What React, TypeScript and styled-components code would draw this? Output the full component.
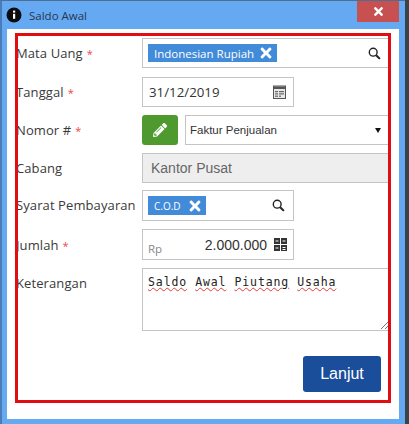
import React from "react";
import styled, { createGlobalStyle } from "styled-components";
import { FaPencilAlt, FaTimes } from "react-icons/fa";

const Global = createGlobalStyle`
  html, body { margin: 0; padding: 0; background: #3d4248; }
  body { width: 409px; height: 424px; overflow: hidden; font-family: "Open Sans", sans-serif; }
`;

const Desktop = styled.div`
  width: 409px;
  height: 424px;
  display: flex;
  align-items: flex-start;
`;

const Win = styled.div`
  position: relative;
  width: 405px;
  height: 424px;
  box-sizing: border-box;
  background: #66a9f3;
  border-left: 2px solid #4a7db5;
  border-top: 1px solid #4f6f92;
  display: flex;
  flex-direction: column;
`;

const TitleBar = styled.div`
  height: 28px;
  flex: none;
  display: flex;
  align-items: center;
  padding-left: 4px;
  gap: 7px;
  font-size: 11.5px;
  color: #26384e;
`;

const CloseBtn = styled.div`
  position: absolute;
  top: 0;
  right: 6px;
  width: 42px;
  height: 21px;
  background: #c75050;
  color: #fff;
  display: flex;
  align-items: center;
  justify-content: center;
  font-size: 13px;
`;

const Body = styled.div`
  margin: 0 6px 0 5px;
  height: 390px;
  background: #fff;
  box-sizing: border-box;
  padding: 9px 0 0 9px;
  display: flex;
  flex-direction: column;
`;

const Row = styled.div<{ $h: number; $gap: number }>`
  display: flex;
  height: ${(p) => p.$h}px;
  margin-bottom: ${(p) => p.$gap}px;
  align-items: center;
`;

const TopRow = styled(Row)`
  align-items: flex-start;
`;

const Label = styled.div`
  width: 126px;
  flex: none;
  font-size: 13px;
  letter-spacing: 0.1px;
  color: #3a3a3a;
  white-space: nowrap;
`;

const TopLabel = styled(Label)`
  padding-top: 6px;
`;

const RaisedLabel = styled(Label)`
  margin-top: -2px;
`;

const Req = styled.span`
  color: #ea4a4a;
  margin-left: 4px;
  font-size: 11px;
`;

const Field = styled.div<{ $w: number; $disabled?: boolean; $pr?: number }>`
  width: ${(p) => p.$w}px;
  height: 100%;
  box-sizing: border-box;
  border: 1px solid #c4c4c4;
  background: ${(p) => (p.$disabled ? "#eeeeee" : "#fff")};
  display: flex;
  align-items: center;
  padding: 0 ${(p) => p.$pr ?? 8}px 0 5px;
`;

const Tag = styled.span`
  display: inline-flex;
  align-items: center;
  height: 18px;
  padding: 0 3px 0 6px;
  gap: 4px;
  background: #428bd9;
  color: #fff;
  font-size: 11.5px;
  white-space: nowrap;
`;

const SmallTag = styled(Tag)`
  font-size: 10px;
  height: 19px;
  gap: 6px;
`;

const Spacer = styled.div`
  flex: 1;
`;

const DateText = styled.span`
  font-size: 13.3px;
  color: #333;
  padding-left: 1px;
`;

const GreenBtn = styled.div`
  width: 36px;
  height: 100%;
  flex: none;
  background: #4f9a2f;
  border-radius: 3px;
  color: #fff;
  display: flex;
  align-items: center;
  justify-content: center;
  font-size: 14px;
  margin-right: 7px;
`;

const SelectBox = styled.div`
  flex: none;
  width: 206px;
  height: 100%;
  box-sizing: border-box;
  border: 1px solid #c4c4c4;
  display: flex;
  align-items: center;
  justify-content: space-between;
  padding: 0 9px 0 4px;
  font-family: "Liberation Sans", sans-serif;
  font-size: 11.5px;
  color: #333;
`;

const Arrow = styled.span`
  width: 0;
  height: 0;
  border-left: 3px solid transparent;
  border-right: 3px solid transparent;
  border-top: 5px solid #111;
`;

const Disabled = styled.span`
  font-family: "Liberation Sans", sans-serif;
  font-size: 14px;
  color: #666;
  padding-left: 3px;
`;

const Rp = styled.span`
  font-size: 11.5px;
  color: #888;
  margin-top: 7px;
`;

const Amount = styled.span`
  font-family: "Liberation Sans", sans-serif;
  font-size: 14px;
  color: #333;
  margin-left: auto;
  margin-right: 7px;
`;

const TextArea = styled.div`
  position: relative;
  width: 249px;
  height: 100%;
  box-sizing: border-box;
  border: 1px solid #c4c4c4;
  padding: 6px 5px;
  font-family: "DejaVu Sans Mono", monospace;
  font-size: 11.5px;
  color: #222;
  display: flex;
  gap: 8px;
  letter-spacing: 0.9px;
`;

const Wavy = styled.span`
  text-decoration: underline wavy #e03c3c 1px;
  text-underline-offset: 1px;
`;

const Grip = styled.svg`
  position: absolute;
  right: 0;
  bottom: 0;
`;

const Footer = styled.div`
  display: flex;
  justify-content: flex-end;
  padding-right: 18px;
`;

const Lanjut = styled.div`
  width: 78px;
  height: 36px;
  background: #1a4e9b;
  border-radius: 3px;
  color: #fff;
  font-family: "Liberation Sans", sans-serif;
  font-size: 16px;
  display: flex;
  align-items: center;
  justify-content: center;
`;

const Annotation = styled.div`
  position: absolute;
  left: 13px;
  top: 32px;
  width: 376px;
  height: 370px;
  box-sizing: border-box;
  border: 3px solid #e20d13;
  pointer-events: none;
`;

const InfoIcon = () => (
  <svg width="16" height="16" viewBox="0 0 16 16">
    <circle cx="8" cy="8" r="7.5" fill="#0c0c0c" />
    <rect x="7" y="6.8" width="2.2" height="5" fill="#fff" />
    <rect x="7" y="3.6" width="2.2" height="2" fill="#fff" />
  </svg>
);

const SearchIcon = () => (
  <svg width="13" height="13" viewBox="0 0 14 14" fill="none" stroke="#222">
    <circle cx="5.6" cy="5.6" r="4.2" strokeWidth="1.5" />
    <path d="M8.8 8.8 L12.8 12.8" strokeWidth="2.2" />
  </svg>
);

const CalendarIcon = () => (
  <svg width="13" height="14" viewBox="0 0 13 14">
    <rect x="0.5" y="1" width="12" height="12.5" fill="#e8e8e8" stroke="#555" />
    <rect x="1" y="1.5" width="11" height="2.5" fill="#555" />
    <rect x="2" y="6" width="3" height="1.2" fill="#666" />
    <rect x="6" y="6" width="5" height="1.2" fill="#666" />
    <rect x="2" y="8.3" width="3" height="1.2" fill="#666" />
    <rect x="6" y="8.3" width="5" height="1.2" fill="#666" />
    <rect x="2" y="10.6" width="3" height="1.2" fill="#666" />
    <rect x="6" y="10.6" width="2" height="1.2" fill="#666" />
  </svg>
);

const CalcIcon = () => (
  <svg width="13" height="13" viewBox="0 0 13 13">
    <rect x="0" y="0" width="6" height="6" fill="#333" />
    <rect x="7" y="0" width="6" height="6" fill="#333" />
    <rect x="0" y="7" width="6" height="6" fill="#333" />
    <rect x="7" y="7" width="6" height="6" fill="#333" />
    <rect x="1.5" y="2.5" width="3" height="1" fill="#fff" />
    <rect x="8.5" y="2.5" width="3" height="1" fill="#fff" />
    <rect x="1.5" y="9.5" width="3" height="1" fill="#fff" />
    <rect x="8.5" y="9" width="3" height="1" fill="#fff" />
    <rect x="8.5" y="11" width="3" height="1" fill="#fff" />
  </svg>
);

export default function App() {
  return (
    <Desktop>
      <Global />
      <Win>
        <TitleBar>
          <InfoIcon />
          <span>Saldo Awal</span>
        </TitleBar>
        <CloseBtn>
          <FaTimes />
        </CloseBtn>
        <Body>
          <Row $h={30} $gap={9}>
            <Label>
              Mata Uang<Req>*</Req>
            </Label>
            <Field $w={249} $pr={9}>
              <Tag>
                Indonesian Rupiah
                <FaTimes size={16} />
              </Tag>
              <Spacer />
              <SearchIcon />
            </Field>
          </Row>
          <Row $h={30} $gap={8}>
            <Label>
              Tanggal<Req>*</Req>
            </Label>
            <Field $w={152} $pr={7}>
              <DateText>31/12/2019</DateText>
              <Spacer />
              <CalendarIcon />
            </Field>
          </Row>
          <Row $h={30} $gap={8}>
            <Label>
              Nomor #<Req>*</Req>
            </Label>
            <GreenBtn>
              <FaPencilAlt />
            </GreenBtn>
            <SelectBox>
              Faktur Penjualan
              <Arrow />
            </SelectBox>
          </Row>
          <Row $h={30} $gap={7}>
            <Label>Cabang</Label>
            <Field $w={249} $disabled>
              <Disabled>Kantor Pusat</Disabled>
            </Field>
          </Row>
          <Row $h={31} $gap={8}>
            <RaisedLabel>Syarat Pembayaran</RaisedLabel>
            <Field $w={152}>
              <SmallTag>
                C.O.D
                <FaTimes size={16} />
              </SmallTag>
              <Spacer />
              <SearchIcon />
            </Field>
          </Row>
          <Row $h={31} $gap={8}>
            <Label>
              Jumlah<Req>*</Req>
            </Label>
            <Field $w={152} $pr={6}>
              <Rp>Rp</Rp>
              <Amount>2.000.000</Amount>
              <CalcIcon />
            </Field>
          </Row>
          <TopRow $h={63} $gap={25}>
            <TopLabel>Keterangan</TopLabel>
            <TextArea>
              <Wavy>Saldo</Wavy>
              <Wavy>Awal</Wavy>
              <Wavy>Piutang</Wavy>
              <Wavy>Usaha</Wavy>
              <Grip width="10" height="10" viewBox="0 0 10 10" stroke="#777">
                <path d="M1 9 L9 1 M5 9 L9 5" />
              </Grip>
            </TextArea>
          </TopRow>
          <Footer>
            <Lanjut>Lanjut</Lanjut>
          </Footer>
        </Body>
        <Annotation />
      </Win>
    </Desktop>
  );
}
